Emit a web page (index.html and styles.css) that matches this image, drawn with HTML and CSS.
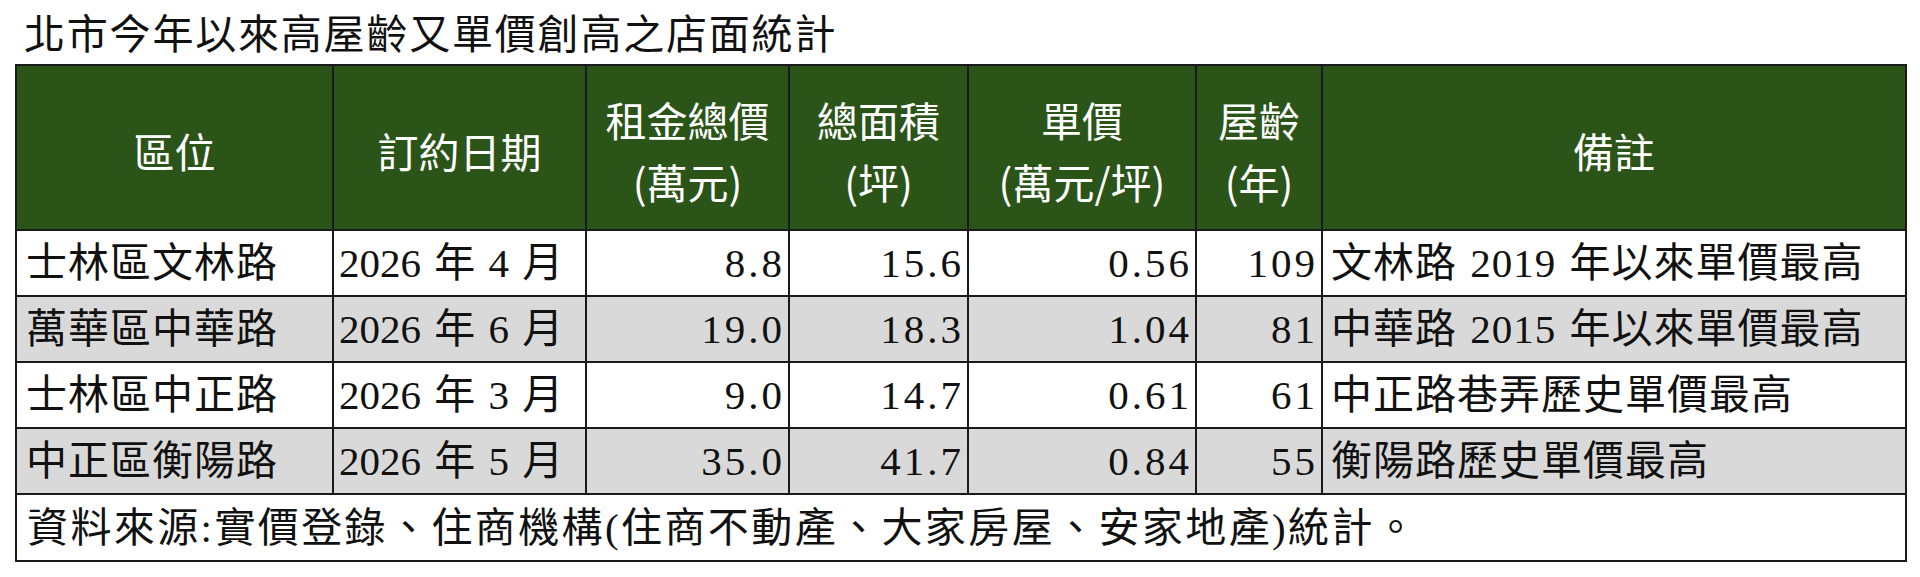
FILE: index.html
```html
<!DOCTYPE html>
<html lang="zh-Hant">
<head>
<meta charset="utf-8">
<title>北市今年以來高屋齡又單價創高之店面統計</title>
<link rel="stylesheet" href="styles.css">
</head>
<body>
<h1 class="title">北市今年以來高屋齡又單價創高之店面統計</h1>
<table class="stats">
  <colgroup>
    <col class="c-area">
    <col class="c-date">
    <col class="c-rent">
    <col class="c-size">
    <col class="c-unit">
    <col class="c-age">
    <col class="c-note">
  </colgroup>
  <thead>
    <tr class="head-row">
      <th>區位</th>
      <th>訂約日期</th>
      <th>租金總價<br>(萬元)</th>
      <th>總面積<br>(坪)</th>
      <th>單價<br>(萬元/坪)</th>
      <th>屋齡<br>(年)</th>
      <th>備註</th>
    </tr>
  </thead>
  <tbody>
    <tr class="row">
      <td class="txt">士林區文林路</td>
      <td class="date">2026 年 4 月</td>
      <td class="num">8.8</td>
      <td class="num">15.6</td>
      <td class="num">0.56</td>
      <td class="num">109</td>
      <td class="note">文林路 2019 年以來單價最高</td>
    </tr>
    <tr class="row alt">
      <td class="txt">萬華區中華路</td>
      <td class="date">2026 年 6 月</td>
      <td class="num">19.0</td>
      <td class="num">18.3</td>
      <td class="num">1.04</td>
      <td class="num">81</td>
      <td class="note">中華路 2015 年以來單價最高</td>
    </tr>
    <tr class="row">
      <td class="txt">士林區中正路</td>
      <td class="date">2026 年 3 月</td>
      <td class="num">9.0</td>
      <td class="num">14.7</td>
      <td class="num">0.61</td>
      <td class="num">61</td>
      <td class="note">中正路巷弄歷史單價最高</td>
    </tr>
    <tr class="row alt">
      <td class="txt">中正區衡陽路</td>
      <td class="date">2026 年 5 月</td>
      <td class="num">35.0</td>
      <td class="num">41.7</td>
      <td class="num">0.84</td>
      <td class="num">55</td>
      <td class="note">衡陽路歷史單價最高</td>
    </tr>
  </tbody>
  <tfoot>
    <tr class="foot-row">
      <td class="source" colspan="7">資料來源:實價登錄、住商機構(住商不動產、大家房屋、安家地產)統計。</td>
    </tr>
  </tfoot>
</table>
</body>
</html>
```

FILE: styles.css
```css
html, body {
  margin: 0;
  padding: 0;
  background: #ffffff;
}

body {
  font-family: "Liberation Serif", "Noto Sans CJK TC", serif;
  color: #111111;
}

.title {
  margin: 0;
  height: 64px;
  padding-left: 24px;
  font-family: "Noto Sans CJK TC", sans-serif;
  font-size: 41px;
  font-weight: 400;
  letter-spacing: 1.8px;
  line-height: 62px;
  color: #111111;
}

.stats {
  margin-left: 15px;
  width: 1892px;
  table-layout: fixed;
  border-collapse: collapse;
  border: 2px solid #2a2a2a;
  font-size: 41px;
}

.c-area { width: 317px; }
.c-date { width: 253px; }
.c-rent { width: 203px; }
.c-size { width: 179px; }
.c-unit { width: 228px; }
.c-age  { width: 126px; }
.c-note { width: 584px; }

.stats th,
.stats td {
  border: 2px solid #1a1a1a;
  padding: 0;
  vertical-align: middle;
  white-space: nowrap;
  overflow: hidden;
}

.head-row {
  height: 165px;
}

.head-row th {
  background: #2b5419;
  color: #ffffff;
  font-family: "Noto Sans CJK TC", sans-serif;
  font-weight: 400;
  font-size: 41px;
  line-height: 62px;
  text-align: center;
  padding-top: 4px;
}

.row {
  height: 66px;
  background: #ffffff;
}

.row.alt {
  background: #d9d9d9;
}

.row td {
  line-height: 50px;
}

.txt {
  padding-left: 9px !important;
  text-align: left;
  letter-spacing: 1px;
}

.date {
  padding-left: 5px !important;
  text-align: left;
  word-spacing: 3px;
}

.num {
  padding-right: 3px !important;
  text-align: right;
  letter-spacing: 3px;
}

.note {
  padding-left: 8px !important;
  text-align: left;
  letter-spacing: 1px;
  word-spacing: 2px;
}

.foot-row {
  height: 67px;
}

.source {
  padding-left: 10px !important;
  text-align: left;
  line-height: 50px;
  letter-spacing: 2.4px;
}
```
